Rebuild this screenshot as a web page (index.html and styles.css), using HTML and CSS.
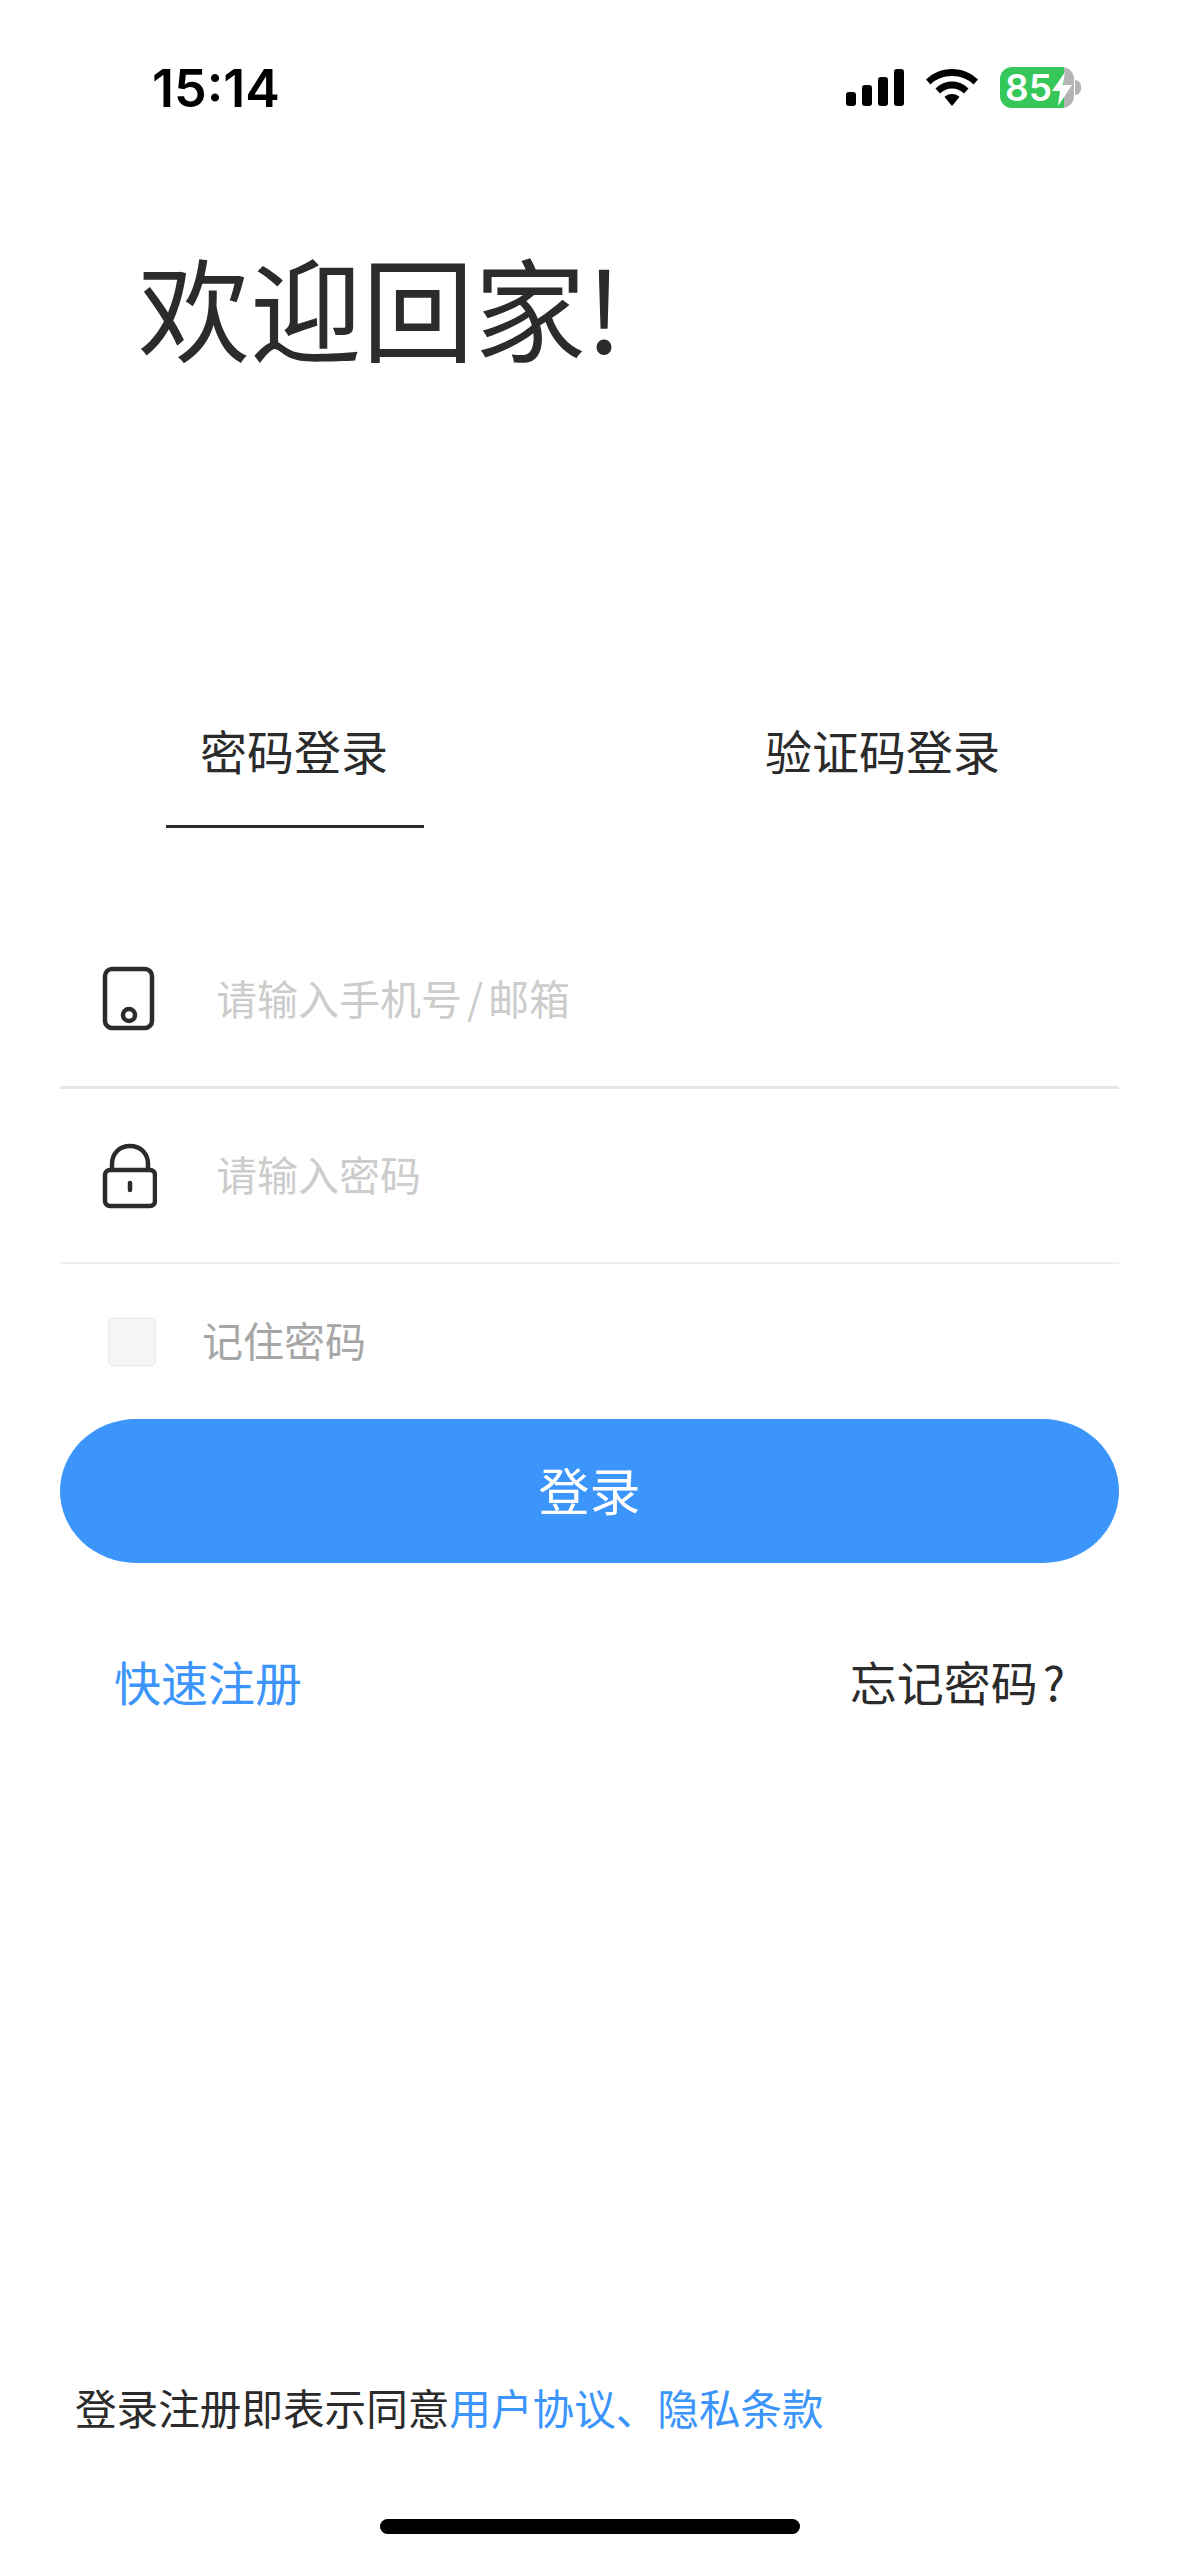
FILE: index.html
```html
<!DOCTYPE html>
<html lang="zh-CN">
<head>
    <meta charset="UTF-8">
    <meta name="viewport" content="width=device-width, initial-scale=1.0">
    <title>登录</title>
    <link rel="stylesheet" href="styles.css">
</head>
<body>
    <div class="page">
        <!-- 状态栏 -->
        <div class="status-bar">
            <span class="time">15:14</span>
            <div class="status-icons">
                <svg class="signal" width="58" height="37" viewBox="0 0 58 37">
                    <rect x="0" y="23" width="10" height="14" rx="3"/>
                    <rect x="16" y="16" width="10" height="21" rx="3"/>
                    <rect x="32" y="8" width="10" height="29" rx="3"/>
                    <rect x="48" y="0" width="10" height="37" rx="3"/>
                </svg>
                <svg class="wifi" width="52" height="37" viewBox="0 0 52 37">
                    <path d="M26 0C16 0 7 4 0 10.500L4.500 15.500C10 10 17.500 7 26 7C34.500 7 42 10 47.500 15.500L52 10.500C45 4 36 0 26 0Z"/>
                    <path d="M26 12.500C20 12.500 14 15 9.500 19.500L14 24.500C17 21.500 21 19.500 26 19.500C31 19.500 35 21.500 38 24.500L42.500 19.500C38 15 32 12.500 26 12.500Z"/>
                    <path d="M26 25C23 25 20.500 26 18.500 28L26 37L33.500 28C31.500 26 29 25 26 25Z"/>
                </svg>
                <div class="battery">
                    <span class="battery-num">85</span>
                    <svg class="bolt" width="20" height="34" viewBox="0 0 20 34">
                        <path d="M13 0L0 19H8L6 34L20 13H11Z"/>
                    </svg>
                </div>
            </div>
        </div>

        <h1 class="title">欢迎回家!</h1>

        <!-- 登录方式 -->
        <div class="tabs">
            <div class="tab tab-active">密码登录</div>
            <div class="tab">验证码登录</div>
        </div>

        <div class="form">
            <div class="field field-first">
                <svg class="field-icon" width="56" height="66" viewBox="0 0 56 66">
                    <rect x="4" y="4" width="47" height="59" rx="7"/>
                    <circle cx="28" cy="50" r="6"/>
                </svg>
                <span class="placeholder">请输入手机号<span class="slash">/</span>邮箱</span>
            </div>
            <div class="field field-second">
                <svg class="field-icon" width="56" height="66" viewBox="0 0 56 66">
                    <rect x="4" y="27" width="50" height="36" rx="5"/>
                    <path d="M11 27V21C11 11 18 3 29 3C40 3 47 11 47 21V27"/>
                    <path class="keyhole" d="M29 40V47"/>
                </svg>
                <span class="placeholder">请输入密码</span>
            </div>
            <div class="remember">
                <span class="checkbox"></span>
                <span class="remember-text">记住密码</span>
            </div>
            <button class="login-btn">登录</button>
            <div class="links">
                <a class="link-blue">快速注册</a>
                <a class="link-dark">忘记密码<span class="question">?</span></a>
            </div>
        </div>

        <div class="agreement">登录注册即表示同意<span class="agreement-blue">用户协议、隐私条款</span></div>
        <div class="home-bar"></div>
    </div>
</body>
</html>
```

FILE: styles.css
```css
* {
    box-sizing: border-box;
}

body {
    margin: 0;
    padding: 0;
    background-color: #ffffff;
    font-family: "Noto Sans CJK SC", "Noto Sans", sans-serif;
    color: #2b2b2b;
}

.page {
    width: 1179px;
    height: 2556px;
    display: flex;
    flex-direction: column;
    overflow: hidden;
}

.status-bar {
    height: 235px;
    padding: 60px 105px 0 152px;
    display: flex;
    justify-content: space-between;
    align-items: flex-start;
}

.time {
    font-family: Inter, "Liberation Sans", sans-serif;
    font-size: 52px;
    font-weight: 600;
    line-height: 54px;
    color: #000;
    margin-top: 2px;
}

.status-icons {
    display: flex;
    align-items: center;
    gap: 22px;
    margin-top: 7px;
}

.signal, .wifi {
    fill: #000;
}

.battery {
    width: 74px;
    height: 41px;
    border-radius: 12px;
    background: linear-gradient(to right, #35c759 0, #35c759 64px, #b4b4b4 64px);
    position: relative;
    display: flex;
    align-items: center;
    padding-left: 5px;
}

.battery::after {
    content: "";
    position: absolute;
    left: 75px;
    top: 13px;
    width: 6px;
    height: 15px;
    border-radius: 0 8px 8px 0;
    background-color: #b4b4b4;
}

.battery-num {
    font-family: Inter, "Liberation Sans", sans-serif;
    font-size: 37px;
    font-weight: 600;
    line-height: 41px;
    color: #fff;
}

.bolt {
    position: absolute;
    left: 52px;
    top: 5px;
    fill: #fff;
}

.title {
    margin: 0;
    padding-left: 138px;
    font-size: 112px;
    font-weight: 400;
    line-height: 140px;
    color: #2b2b2b;
}

.tabs {
    margin-top: 345px;
    display: flex;
    padding: 0 60px;
}

.tab {
    font-size: 47px;
    font-weight: 400;
    line-height: 60px;
    padding-bottom: 45px;
}

.tab:first-child {
    margin-left: 106px;
    width: 258px;
    padding-left: 34px;
    white-space: nowrap;
    border-bottom: 3px solid #2b2b2b;
}

.tab:last-child {
    margin-left: 341px;
}

.form {
    margin-top: 110px;
    padding: 0 60px;
}

.field {
    display: flex;
    align-items: center;
    padding-left: 41px;
}

.field-first {
    height: 151px;
    padding-bottom: 28px;
    border-bottom: 3px solid #e6e6e6;
}

.field-second {
    height: 175px;
    border-bottom: 2px solid #efefef;
}

.field-second .placeholder {
    margin-top: -5px;
}

.field-icon {
    flex-shrink: 0;
    fill: none;
    stroke: #2b2b2b;
    stroke-width: 4.500;
    margin-right: 59px;
}

.keyhole {
    stroke-linecap: round;
}

.placeholder {
    font-size: 41px;
    font-weight: 400;
    line-height: 60px;
    color: #cccccc;
    margin-top: -3px;
}

.slash {
    margin: 0 5px;
}

.remember {
    height: 155px;
    display: flex;
    align-items: center;
    padding-left: 48px;
}

.checkbox {
    width: 48px;
    height: 48px;
    border: 1px solid #e8e8e8;
    border-radius: 5px;
    background-color: #f6f6f6;
    margin-right: 46px;
}

.remember-text {
    font-size: 41px;
    font-weight: 400;
    color: #a6a6a6;
    margin-top: -5px;
}

.login-btn {
    display: block;
    width: 1059px;
    height: 144px;
    border: none;
    border-radius: 76px / 72px;
    background-color: #3b95fb;
    color: #fff;
    font-family: inherit;
    font-size: 51px;
    font-weight: 400;
    padding: 0 0 4px;
}

.links {
    margin-top: 75px;
    display: flex;
    justify-content: space-between;
    padding: 0 54px 0 54px;
    font-size: 47px;
    line-height: 86px;
}

.question {
    margin-left: 5px;
}

.link-blue, .agreement-blue {
    color: #3b95fb;
}

.agreement {
    margin-top: auto;
    padding-left: 75px;
    font-size: 41.600px;
    line-height: 60px;
}

.home-bar {
    width: 420px;
    height: 15px;
    margin: 82px auto 22px;
    border-radius: 8px;
    background-color: #000;
}
```
